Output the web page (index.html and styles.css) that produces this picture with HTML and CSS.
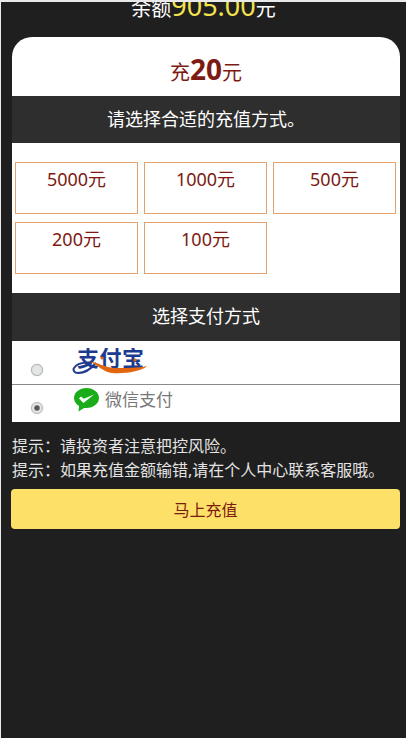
FILE: index.html
```html
<!DOCTYPE html>
<html lang="zh-CN">
<head>
    <meta charset="UTF-8">
    <meta name="viewport" content="width=device-width, initial-scale=1.0">
    <title>充值</title>
    <link rel="stylesheet" href="styles.css">
</head>
<body>
    <div class="balance">
        <p class="balance-text">余额<span class="balance-num">905.00</span>元</p>
    </div>

    <div class="card">
        <div class="card-head">充<b class="amount">20</b>元</div>
        <div class="bar">请选择合适的充值方式。</div>
        <div class="options">
            <div class="option">5000元</div>
            <div class="option">1000元</div>
            <div class="option">500元</div>
            <div class="option">200元</div>
            <div class="option">100元</div>
        </div>
        <div class="bar bar-pay">选择支付方式</div>
        <label class="pay-row pay-alipay">
            <input class="radio" type="radio" name="pay">
            <svg class="alipay-logo" width="76" height="27" viewBox="0 0 76 27">
                <text class="alipay-text" x="5" y="18" textLength="67">支付宝</text>
                <path d="M24 15C19 21 12 25 6 25C2 25 0.800 22 2 20C4.500 15.500 12 14 20 14.500" fill="none" stroke="#1d3c8f" stroke-width="2"/>
                <path d="M18 13.500C26 14 32 20 44 20C54 20 66 20 75 18C70 23.500 52 26 40 25C32 24 26 18 18 13.500Z" fill="#e2660f"/>
                <circle cx="30" cy="10" r="1.500" fill="#e2660f"/>
                <circle cx="63" cy="12" r="1.500" fill="#e2660f"/>
            </svg>
        </label>
        <label class="pay-row pay-wechat">
            <input class="radio" type="radio" name="pay" checked>
            <svg class="wechat-logo" width="25" height="24" viewBox="0 0 25 24">
                <path d="M12.500 0C5.600 0 0 4.400 0 10C0 13.400 2 16.200 5.100 18L4.500 23.500L10 20C10.800 20 11.700 20.100 12.500 20C19.400 20 25 15.500 25 10C25 4.400 19.400 0 12.500 0Z" fill="#1aad19"/>
                <path d="M5 10.500L9.500 15L20 6.500L9.800 10.800L7 8.500Z" fill="#fff"/>
            </svg>
            <span class="wechat-name">微信支付</span>
        </label>
    </div>

    <div class="tips">
        <p>提示：请投资者注意把控风险。</p>
        <p>提示：如果充值金额输错,请在个人中心联系客服哦。</p>
    </div>
    <button class="submit-btn">马上充值</button>
</body>
</html>
```

FILE: styles.css
```css
* {
    margin: 0;
    padding: 0;
    box-sizing: border-box;
}

body {
    font-family: "Noto Sans", "Noto Sans CJK SC", sans-serif;
    background: #1f1f1f;
    border-top: 2px solid #e9e9e9;
    border-left: 1px solid #e9e9e9;
    min-height: 100vh;
    color: #fff;
}

.balance {
    height: 35px;
    overflow: hidden;
    text-align: center;
}

.balance-text {
    margin-top: -11px;
    font-size: 20px;
    line-height: 30px;
}

.balance-num {
    font-size: 27px;
    color: #f4e24f;
}

.card {
    width: 388px;
    margin-left: 11px;
    background: #fff;
    border-radius: 20px 20px 0 0;
    overflow: hidden;
}

.card-head {
    height: 59px;
    line-height: 64px;
    text-align: center;
    font-size: 20px;
    color: #7d1a12;
}

.amount {
    font-size: 28px;
}

.bar {
    height: 47px;
    line-height: 47px;
    background: #2e2e2e;
    text-align: center;
    font-size: 18px;
    color: #fff;
}

.bar-pay {
    height: 48px;
    line-height: 46px;
}

.options {
    height: 150px;
    padding: 19px 3px 0;
    display: grid;
    grid-template-columns: repeat(3, 123px);
    grid-auto-rows: 52px;
    gap: 8px 6px;
}

.option {
    border: 1px solid #e3a26b;
    text-align: center;
    font-size: 18px;
    line-height: 32px;
    color: #7d1a12;
}

.pay-row {
    display: flex;
    align-items: flex-start;
    padding-left: 19px;
}

.pay-alipay {
    height: 44px;
    border-bottom: 1px solid #8a8a8e;
}

.pay-wechat {
    height: 37px;
}

.radio {
    appearance: none;
    flex: none;
    width: 12px;
    height: 12px;
    border-radius: 50%;
    border: 1px solid #b4b8b8;
    background: #e4e6e6;
    box-shadow: 0 0 1px #aaa;
}

.radio:checked {
    background: radial-gradient(circle, #555 0, #555 2px, #e4e6e6 3.500px);
}

.pay-alipay .radio {
    margin-top: 23px;
}

.pay-wechat .radio {
    margin-top: 17px;
}

.alipay-logo {
    margin: 7px 0 0 29px;
}

.alipay-text {
    font-size: 22px;
    font-weight: 700;
    fill: #1d3c8f;
}

.wechat-logo {
    margin: 3px 0 0 31px;
}

.wechat-name {
    margin-left: 6px;
    font-size: 17px;
    line-height: 29px;
    color: #777;
}

.tips {
    margin: 12px 0 0 11px;
    font-size: 16px;
    line-height: 24px;
    color: #e4e4e4;
}

.submit-btn {
    display: block;
    width: 389px;
    height: 40px;
    margin: 7px 0 0 10px;
    border: none;
    border-radius: 4px;
    background: #fde068;
    color: #7d1a12;
    font-family: inherit;
    font-size: 16px;
}
```
